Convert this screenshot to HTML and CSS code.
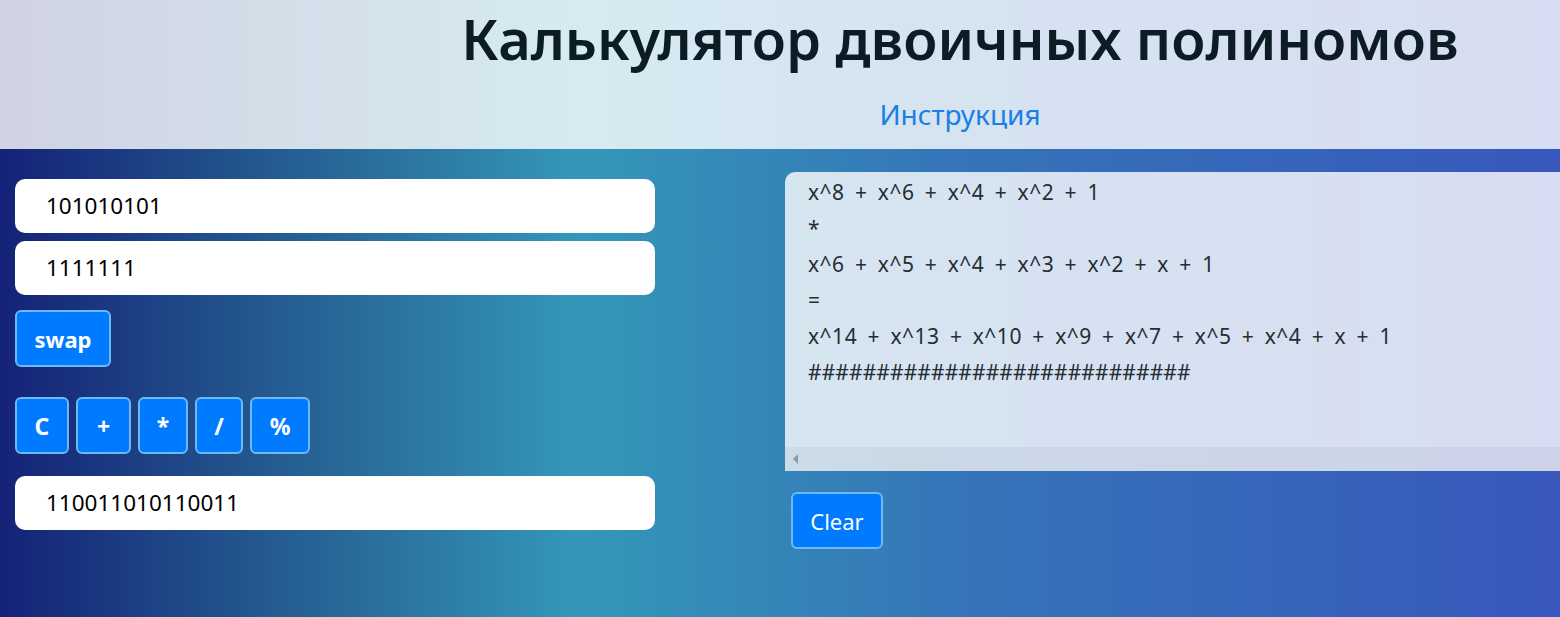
FILE: index.html
```html
<!DOCTYPE html>
<html lang="ru">
<head>
<meta charset="utf-8">
<title>Калькулятор двоичных полиномов</title>
<link rel="stylesheet" href="styles.css">
</head>
<body>
<header class="top">
  <h1 class="title">Калькулятор двоичных полиномов</h1>
  <a class="help" href="#">Инструкция</a>
</header>
<main class="main">
  <section class="left">
    <div class="field">101010101</div>
    <div class="field">1111111</div>
    <button class="btn btn-bold swap">swap</button>
    <div class="ops">
      <button class="btn btn-bold op">C</button>
      <button class="btn btn-bold op">+</button>
      <button class="btn btn-bold op">*</button>
      <button class="btn btn-bold op">/</button>
      <button class="btn btn-bold op">%</button>
    </div>
    <div class="field result">110011010110011</div>
  </section>
  <section class="right">
    <div class="log">
      <div class="log-text">
        <div class="line">x^8 + x^6 + x^4 + x^2 + 1</div>
        <div class="line">*</div>
        <div class="line">x^6 + x^5 + x^4 + x^3 + x^2 + x + 1</div>
        <div class="line">=</div>
        <div class="line">x^14 + x^13 + x^10 + x^9 + x^7 + x^5 + x^4 + x + 1</div>
        <div class="line hashes">############################</div>
      </div>
      <div class="hscroll"><span class="arrow-left"></span></div>
    </div>
    <button class="btn clear">Clear</button>
  </section>
</main>
</body>
</html>
```
FILE: styles.css
```css
html, body {
  margin: 0;
  padding: 0;
}
body {
  width: 1560px;
  height: 617px;
  overflow: hidden;
  font-family: "Noto Sans", "Open Sans", sans-serif;
  background: linear-gradient(90deg, #142277 0%, #24598f 17%, #3497b8 37%, #3574b8 62%, #3857bd 100%);
}
.top {
  height: 149px;
  box-sizing: border-box;
  background: rgba(255, 255, 255, 0.8);
  padding-left: 360px;
  text-align: center;
}
.title {
  margin: 0;
  font-size: 56px;
  font-weight: 600;
  line-height: 76px;
  color: #0b1c24;
}
.help {
  display: inline-block;
  margin-top: 22px;
  font-size: 28px;
  line-height: 32px;
  color: #1a7fe6;
  text-decoration: none;
}
.main {
  display: flex;
}
.left {
  width: 640px;
  margin-left: 15px;
  padding-top: 30px;
  display: flex;
  flex-direction: column;
  align-items: flex-start;
}
.field {
  width: 640px;
  height: 54px;
  box-sizing: border-box;
  background: #fff;
  border-radius: 10px;
  padding-left: 31px;
  font-size: 22.5px;
  line-height: 54px;
  color: #000;
  margin-bottom: 8px;
}
.btn {
  background: #007bff;
  border: 2px solid #6db9f2;
  border-radius: 6px;
  color: #fff;
  font-family: "Noto Sans", "Open Sans", sans-serif;
  font-size: 22px;
  height: 57px;
  box-sizing: border-box;
  padding: 0;
  cursor: pointer;
}
.btn-bold {
  font-weight: 700;
}
.swap {
  margin-top: 7px;
  width: 96px;
}
.ops {
  display: flex;
  gap: 7px;
  margin-top: 30px;
  margin-bottom: 22px;
}
.op {
  font-size: 23px;
}
.op:nth-child(1) { width: 54px; }
.op:nth-child(2) { width: 55px; }
.op:nth-child(3) { width: 50px; }
.op:nth-child(4) { width: 48px; }
.op:nth-child(5) { width: 60px; }
.right {
  flex: 1;
  margin-left: 130px;
  margin-right: -30px;
  padding-top: 23px;
  display: flex;
  flex-direction: column;
  align-items: flex-start;
}
.log {
  align-self: stretch;
  height: 299px;
  background: rgba(255, 255, 255, 0.8);
  border-radius: 10px 10px 0 0;
  display: flex;
  flex-direction: column;
}
.log-text {
  flex: 1;
  padding: 2px 0 0 23px;
  color: #262d33;
  font-size: 21px;
  line-height: 36px;
}
.line {
  white-space: pre;
  letter-spacing: 0.5px;
  word-spacing: 4.4px;
}
.hashes {
  letter-spacing: 0.1px;
}
.hscroll {
  height: 24px;
  background: rgba(10, 35, 80, 0.055);
  display: flex;
  align-items: center;
  padding-left: 8px;
}
.arrow-left {
  width: 0;
  height: 0;
  border-top: 5px solid transparent;
  border-bottom: 5px solid transparent;
  border-right: 5px solid #8e99a6;
}
.clear {
  margin-top: 21px;
  margin-left: 6px;
  width: 92px;
  font-weight: 400;
}
```
